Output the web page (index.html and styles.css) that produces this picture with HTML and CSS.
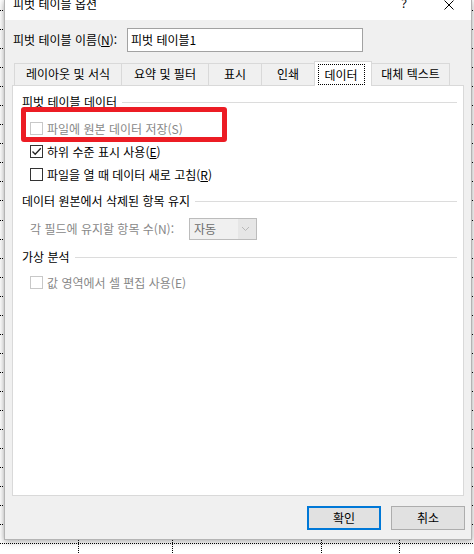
FILE: index.html
```html
<!DOCTYPE html>
<html lang="ko">
<head>
<meta charset="utf-8">
<title>피벗 테이블 옵션</title>
<link rel="stylesheet" href="styles.css">
</head>
<body>
<svg class="sheet" width="474" height="554" viewBox="0 0 474 554" aria-hidden="true">
  <path class="grid" d="M0 10.5H474M0 29.5H474M0 48.5H474M0 67.5H474M0 86.5H474M0 105.5H474M0 124.5H474M0 143.5H474M0 162.5H474M0 181.5H474M0 200.5H474M0 220.5H474M0 239.5H474M0 258.5H474M0 277.5H474M0 296.5H474M0 315.5H474M0 334.5H474M0 353.5H474M0 372.5H474M0 391.5H474M0 410.5H474M0 429.5H474M0 448.5H474M0 467.5H474M0 486.5H474M0 505.5H474M0 524.5H474M0 543.5H474"/>
  <path class="grid" d="M78.5 0V554M172.5 0V554M321.5 0V554M399.5 0V554"/>
</svg>
<div class="dialog">
  <div class="titlebar">
    <span class="title">피벗 테이블 옵션</span>
    <span class="help">?</span>
    <span class="close"><svg width="10" height="10" viewBox="0 0 10 10"><path d="M0.5 0.5L9.5 9.5M9.5 0.5L0.5 9.5"/></svg></span>
  </div>
  <div class="namerow">
    <span class="namelabel">피벗 테이블 이름(<u>N</u>):</span>
    <div class="textbox">피벗 테이블1</div>
  </div>
  <div class="tabs">
    <div class="tab w1">레이아웃 및 서식</div>
    <div class="tab w2">요약 및 필터</div>
    <div class="tab w3">표시</div>
    <div class="tab w4">인쇄</div>
    <div class="tab w5 active"><span class="focus">데이터</span></div>
    <div class="tab w6">대체 텍스트</div>
  </div>
  <div class="panel">
    <div class="annot"></div>
    <div class="group"><span>피벗 테이블 데이터</span><i class="rule"></i></div>
    <div class="check disabled first"><span class="box"></span><span>파일에 원본 데이터 저장(S)</span></div>
    <div class="check"><span class="box"><svg width="11" height="11" viewBox="0 0 11 11"><path d="M1.5 5.5L4.2 8.3L9.8 2.2"/></svg></span><span>하위 수준 표시 사용(<u>E</u>)</span></div>
    <div class="check"><span class="box"></span><span>파일을 열 때 데이터 새로 고침(<u>R</u>)</span></div>
    <div class="group g2"><span>데이터 원본에서 삭제된 항목 유지</span><i class="rule"></i></div>
    <div class="comborow">
      <span class="combolabel">각 필드에 유지할 항목 수(N):</span>
      <div class="combo">
        <span class="combofield">자동</span>
        <span class="comboarrow"><svg width="18" height="20" viewBox="0 0 18 20"><path d="M4 8L7.5 11.5L11 8"/></svg></span>
      </div>
    </div>
    <div class="group g3"><span>가상 분석</span><i class="rule"></i></div>
    <div class="check disabled last"><span class="box"></span><span>값 영역에서 셀 편집 사용(E)</span></div>
  </div>
  <div class="buttons">
    <div class="btn default">확인</div>
    <div class="btn">취소</div>
  </div>
</div>
</body>
</html>
```
FILE: styles.css
```css
* { box-sizing: border-box; }
html, body { margin: 0; padding: 0; }
body {
  width: 474px;
  height: 554px;
  overflow: hidden;
  position: relative;
  background: #fff;
  font-family: "Noto Sans CJK KR", "Noto Sans", sans-serif;
  font-size: 12px;
  line-height: 16px;
  color: #000;
}
.sheet { position: absolute; left: 0; top: 0; }
.grid { stroke: #000; stroke-width: 1; stroke-dasharray: 1 1; fill: none; }

.dialog {
  position: relative;
  z-index: 1;
  margin-left: 4px;
  width: 468px;
  height: 540px;
  border: 1px solid #b4b4b4;
  border-top: 0;
  background: #f0f0f0;
  box-shadow: 0 0 5px rgba(0,0,0,.22), 0 3px 7px rgba(0,0,0,.18);
  display: flex;
  flex-direction: column;
}

.titlebar {
  height: 20px;
  flex: none;
  background: #fff;
  display: flex;
  align-items: flex-start;
  overflow: hidden;
}
.title { flex: 1; padding-left: 8px; margin-top: -4px; }
.help { width: 46px; text-align: center; font-family: "Noto Sans", sans-serif; margin-top: -4px; }
.close { width: 44px; display: flex; justify-content: center; }
.close svg { display: block; }
.close path { stroke: #000; stroke-width: 1; fill: none; }

.namerow {
  margin-top: 8px;
  height: 24px;
  flex: none;
  display: flex;
  align-items: center;
  padding-left: 8px;
}
.namelabel { width: 114px; }
.textbox {
  width: 236px;
  height: 24px;
  border: 1px solid #a2a2a2;
  background: #fff;
  padding-left: 3px;
  line-height: 22px;
}

.tabs {
  margin-top: 9px;
  margin-left: 9px;
  height: 24px;
  flex: none;
  display: flex;
  align-items: flex-end;
  position: relative;
  z-index: 2;
}
.tab {
  height: 22px;
  border: 1px solid #d9d9d9;
  border-bottom: 0;
  margin-left: -1px;
  text-align: center;
  line-height: 20px;
  background: #f0f0f0;
  white-space: nowrap;
}
.tab:first-child { margin-left: 0; }
.w1 { width: 108px; }
.w2 { width: 88px; }
.w3 { width: 54px; }
.w4 { width: 54px; }
.w5 { width: 58px; }
.w6 { width: 79px; }
.tab.active {
  height: 25px;
  margin-bottom: -1px;
  background: #fff;
  padding-top: 2px;
  display: flex;
  justify-content: center;
  align-items: flex-start;
}
.focus {
  display: block;
  width: 47px;
  height: 21px;
  border: 1px dotted #000;
  line-height: 19px;
  text-align: center;
  margin-left: -4px;
}

.panel {
  position: relative;
  z-index: 1;
  flex: none;
  margin-left: 7px;
  width: 452px;
  height: 411px;
  border: 1px solid #d9d9d9;
  background: #fff;
  padding: 8px 6px 0 9px;
}
.annot {
  position: absolute;
  left: 8px;
  top: 21px;
  width: 206px;
  height: 35px;
  border: 5px solid #ec1c24;
  border-radius: 3px;
  z-index: 2;
}
.group {
  display: flex;
  align-items: center;
  height: 16px;
  white-space: nowrap;
}
.rule {
  flex: 1;
  height: 1px;
  background: #dcdcdc;
  margin-left: 5px;
}
.g2 { margin-top: 7px; }
.g3 { margin-top: 9px; }

.check {
  display: flex;
  align-items: center;
  height: 23px;
  padding-left: 8px;
}
.check.first { margin-top: 7px; }
.check.last { margin-top: 6px; }
.box {
  width: 13px;
  height: 13px;
  flex: none;
  border: 1px solid #333;
  background: #fff;
  margin-right: 4px;
}
.box svg { display: block; }
.box path { stroke: #222; stroke-width: 1.3; fill: none; }
.disabled { color: #888; }
.disabled .box { border-color: #c8c8c8; }

.comborow {
  margin-top: 9px;
  height: 22px;
  display: flex;
  align-items: center;
  padding-left: 8px;
}
.combolabel { width: 159px; color: #888; white-space: nowrap; }
.combo {
  width: 68px;
  height: 22px;
  border: 1px solid #bcbcbc;
  background: #e6e6e6;
  display: flex;
}
.combofield {
  width: 48px;
  background: #f0f0f0;
  color: #6d6d6d;
  padding-left: 4px;
  line-height: 20px;
}
.comboarrow { flex: 1; }
.comboarrow svg { display: block; }
.comboarrow path { stroke: #b8b8b8; stroke-width: 1; fill: none; }

.buttons {
  margin-top: 10px;
  display: flex;
  justify-content: flex-end;
  gap: 10px;
  padding-right: 6px;
}
.btn {
  width: 74px;
  height: 24px;
  border: 1px solid #adadad;
  background: #e1e1e1;
  text-align: center;
  line-height: 22px;
}
.btn.default {
  border: 2px solid #0078d7;
  line-height: 20px;
}
```
